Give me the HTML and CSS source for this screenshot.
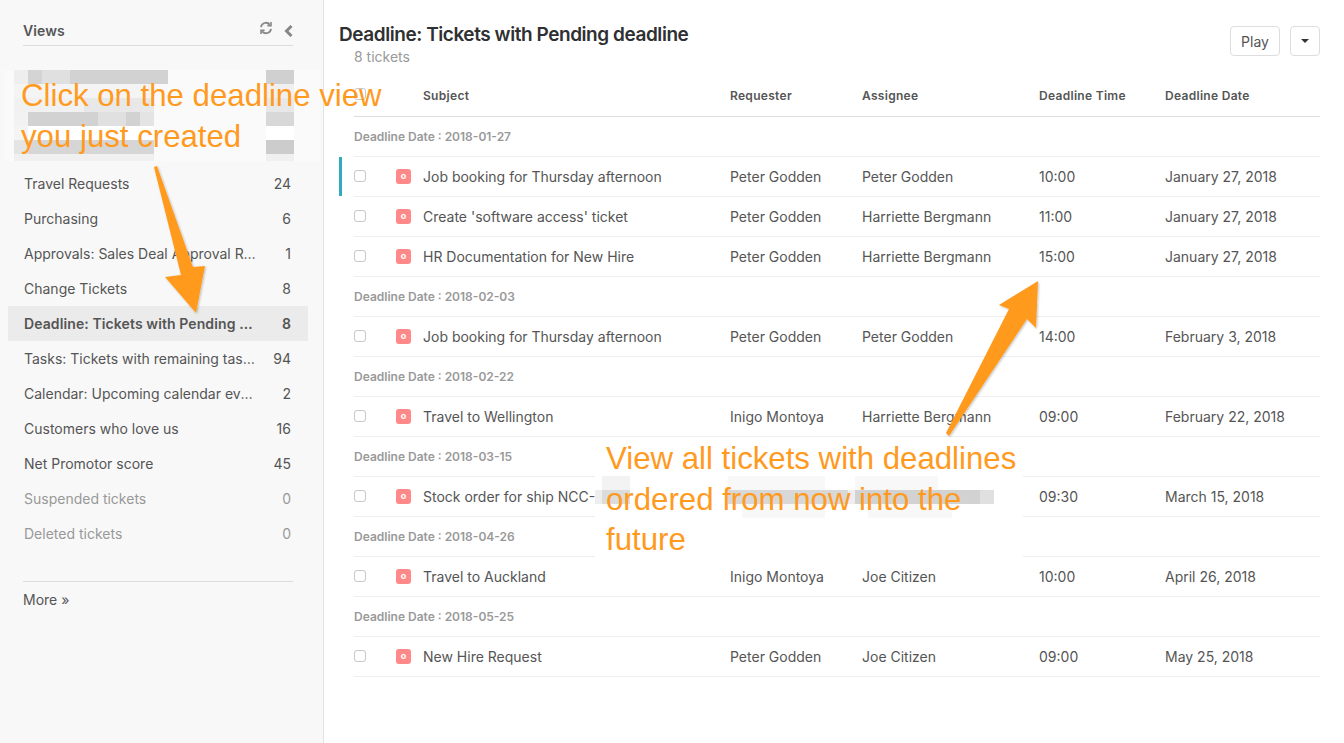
FILE: index.html
```html
<!DOCTYPE html>
<html lang="en">
<head>
<meta charset="utf-8">
<title>Deadline: Tickets with Pending deadline</title>
<link rel="stylesheet" href="styles.css">
</head>
<body>
<div class="app">
  <aside class="sidebar">
    <div class="side-head">
      <span class="side-title">Views</span>
      <svg class="icon-refresh" width="14" height="14" viewBox="0 0 14 14" fill="none" stroke="#888" stroke-width="1.8"><path d="M2 6.2a5 5 0 0 1 8.8-2.6"/><path d="M12 7.8a5 5 0 0 1-8.8 2.6"/><path d="M12 1v3.6H8.4" stroke-width="1.6"/><path d="M2 13V9.4h3.6" stroke-width="1.6"/></svg>
      <svg class="icon-collapse" width="9" height="12" viewBox="0 0 9 12"><path d="M7.5 1 2.5 6l5 5" fill="none" stroke="#888" stroke-width="3"/></svg>
    </div>
    <ul class="view-list">
      <li class="view"><span class="view-name">Travel Requests</span><span class="view-count">24</span></li>
      <li class="view"><span class="view-name">Purchasing</span><span class="view-count">6</span></li>
      <li class="view"><span class="view-name">Approvals: Sales Deal Approval Requests</span><span class="view-count">1</span></li>
      <li class="view"><span class="view-name">Change Tickets</span><span class="view-count">8</span></li>
      <li class="view active"><span class="view-name">Deadline: Tickets with Pending deadline</span><span class="view-count">8</span></li>
      <li class="view"><span class="view-name">Tasks: Tickets with remaining tasks due</span><span class="view-count">94</span></li>
      <li class="view"><span class="view-name">Calendar: Upcoming calendar events list</span><span class="view-count">2</span></li>
      <li class="view"><span class="view-name">Customers who love us</span><span class="view-count">16</span></li>
      <li class="view"><span class="view-name">Net Promotor score</span><span class="view-count">45</span></li>
      <li class="view muted"><span class="view-name">Suspended tickets</span><span class="view-count">0</span></li>
      <li class="view muted"><span class="view-name">Deleted tickets</span><span class="view-count">0</span></li>
    </ul>
    <div class="side-foot">More »</div>
  </aside>

  <main class="main">
    <header class="main-head">
      <div>
        <h1 class="title">Deadline: Tickets with Pending deadline</h1>
        <p class="subtitle">8 tickets</p>
      </div>
      <div class="actions">
        <button class="btn btn-play">Play</button>
        <button class="btn btn-menu"><span class="caret"></span></button>
      </div>
    </header>

    <section class="table">
      <div class="row head"><span class="check"></span><span></span><span>Subject</span><span>Requester</span><span>Assignee</span><span>Deadline Time</span><span>Deadline Date</span></div>

      <div class="group">Deadline Date : 2018-01-27</div>
      <div class="row current"><span class="check"></span><span class="badge">o</span><span>Job booking for Thursday afternoon</span><span>Peter Godden</span><span>Peter Godden</span><span>10:00</span><span>January 27, 2018</span></div>
      <div class="row"><span class="check"></span><span class="badge">o</span><span>Create 'software access' ticket</span><span>Peter Godden</span><span>Harriette Bergmann</span><span>11:00</span><span>January 27, 2018</span></div>
      <div class="row"><span class="check"></span><span class="badge">o</span><span>HR Documentation for New Hire</span><span>Peter Godden</span><span>Harriette Bergmann</span><span>15:00</span><span>January 27, 2018</span></div>

      <div class="group">Deadline Date : 2018-02-03</div>
      <div class="row"><span class="check"></span><span class="badge">o</span><span>Job booking for Thursday afternoon</span><span>Peter Godden</span><span>Peter Godden</span><span>14:00</span><span>February 3, 2018</span></div>

      <div class="group">Deadline Date : 2018-02-22</div>
      <div class="row"><span class="check"></span><span class="badge">o</span><span>Travel to Wellington</span><span>Inigo Montoya</span><span>Harriette Bergmann</span><span>09:00</span><span>February 22, 2018</span></div>

      <div class="group">Deadline Date : 2018-03-15</div>
      <div class="row"><span class="check"></span><span class="badge">o</span><span>Stock order for ship NCC-1701</span><span></span><span></span><span>09:30</span><span>March 15, 2018</span></div>

      <div class="group">Deadline Date : 2018-04-26</div>
      <div class="row"><span class="check"></span><span class="badge">o</span><span>Travel to Auckland</span><span>Inigo Montoya</span><span>Joe Citizen</span><span>10:00</span><span>April 26, 2018</span></div>

      <div class="group">Deadline Date : 2018-05-25</div>
      <div class="row"><span class="check"></span><span class="badge">o</span><span>New Hire Request</span><span>Peter Godden</span><span>Joe Citizen</span><span>09:00</span><span>May 25, 2018</span></div>
    </section>
  </main>
</div>

<svg class="overlay" width="1344" height="743" viewBox="0 0 1344 743">
  <defs>
    <filter id="arrow-shadow" x="-20%" y="-20%" width="140%" height="140%">
      <feDropShadow dx="1" dy="1" stdDeviation="1.2" flood-color="#000" flood-opacity="0.25"/>
    </filter>
  </defs>
  <!-- pixelated redaction, sidebar -->
  <g>
    <rect x="4" y="70" width="316" height="91" fill="#fafafa"/>
    <rect x="14" y="70" width="14" height="14" fill="#eeeeee"/>
    <rect x="28" y="70" width="14" height="14" fill="#d4d4d4"/>
    <rect x="42" y="70" width="28" height="14" fill="#e0e0e0"/>
    <rect x="70" y="70" width="98" height="14" fill="#d2d2d2"/>
    <rect x="14" y="84" width="140" height="14" fill="#f4f4f4"/>
    <rect x="14" y="98" width="70" height="14" fill="#f1f1f1"/>
    <rect x="84" y="98" width="70" height="14" fill="#e8e8e8"/>
    <rect x="14" y="112" width="14" height="14" fill="#f2f2f2"/>
    <rect x="28" y="112" width="70" height="14" fill="#d2d2d2"/>
    <rect x="98" y="112" width="28" height="14" fill="#e0e0e0"/>
    <rect x="126" y="112" width="14" height="14" fill="#d2d2d2"/>
    <rect x="140" y="112" width="14" height="14" fill="#e4e4e4"/>
    <rect x="14" y="126" width="14" height="14" fill="#f4f4f4"/>
    <rect x="28" y="126" width="126" height="14" fill="#fff"/>
    <rect x="14" y="140" width="14" height="14" fill="#e4e4e4"/>
    <rect x="28" y="140" width="126" height="14" fill="#d6d6d6"/>
    <rect x="14" y="154" width="140" height="7" fill="#f0f0f0"/>
    <rect x="266" y="70" width="28" height="14" fill="#d0d0d0"/>
    <rect x="266" y="84" width="28" height="14" fill="#f0f0f0"/>
    <rect x="266" y="98" width="28" height="14" fill="#e8e8e8"/>
    <rect x="266" y="112" width="28" height="14" fill="#d8d8d8"/>
    <rect x="266" y="126" width="28" height="14" fill="#fff"/>
    <rect x="266" y="140" width="28" height="14" fill="#cccccc"/>
    <rect x="266" y="154" width="28" height="7" fill="#f0f0f0"/>
  </g>
  <!-- pixelated redaction, ticket row -->
  <g>
    <rect x="595" y="438" width="428" height="120" fill="#fff"/>
    <rect x="602" y="476" width="28" height="14" fill="#f3f3f3"/>
    <rect x="728" y="476" width="97" height="14" fill="#f8f8f8"/>
    <rect x="855" y="476" width="83" height="14" fill="#f8f8f8"/>
    <rect x="595" y="490" width="7" height="14" fill="#eeeeee"/>
    <rect x="602" y="490" width="28" height="14" fill="#dcdcdc"/>
    <rect x="728" y="490" width="120" height="14" fill="#d8d8d8"/>
    <rect x="848" y="490" width="7" height="14" fill="#eeeeee"/>
    <rect x="855" y="490" width="125" height="14" fill="#d2d2d2"/>
    <rect x="980" y="490" width="14" height="14" fill="#e0e0e0"/>
    <rect x="742" y="504" width="83" height="14" fill="#f8f8f8"/>
    <rect x="868" y="504" width="84" height="14" fill="#f8f8f8"/>
  </g>
  <g fill="#ff9a1f" filter="url(#arrow-shadow)">
    <polygon points="154,167 157,166 193,267 205,266 196,313 165,277 181,275"/>
    <polygon points="946,433 949,436 1027,319 1036,328 1038,281 999,305 1009,309"/>
  </g>
</svg>
<div class="note note-click">Click on the deadline view<br>you just created</div>
<div class="note note-view">View all tickets with deadlines<br>ordered from now into the<br>future</div>
</body>
</html>
```

FILE: styles.css
```css
* { box-sizing: border-box; }
html, body { margin: 0; height: 743px; overflow: hidden; background: #fff; }
body { font-family: Inter, "Liberation Sans", sans-serif; font-size: 14px; color: #555; }
.app { display: flex; height: 743px; }

.sidebar { width: 324px; flex: none; background: #f8f8f8; border-right: 1px solid #e2e2e2; padding: 0 15px 0 8px; }
.side-head { display: flex; align-items: center; height: 46px; margin: 0 15px; padding-top: 16px; border-bottom: 1px solid #ddd; }
.side-title { flex: 1; font-weight: 600; color: #555; letter-spacing: 0.1px; }
.icon-refresh { margin: -5px 11px 0 0; }
.view-list { list-style: none; margin: 120px 0 0; padding: 0; }
.view { display: flex; justify-content: space-between; align-items: center; height: 35px; padding: 0 17px 0 16px; gap: 12px; }
.view-name { white-space: nowrap; overflow: hidden; text-overflow: ellipsis; max-width: 232px; }
.view.active { background: #ebebeb; font-weight: 600; letter-spacing: 0.1px; }
.view.muted { color: #999; }
.side-foot { margin: 30px 15px 0; padding-top: 9px; border-top: 1px solid #ddd; line-height: 17px; }

.main { flex: 1; padding: 0 24px 0 15px; min-width: 0; }
.main-head { display: flex; justify-content: space-between; height: 76px; }
.title { margin: 23px 0 0; font-size: 19px; line-height: 24px; font-weight: 600; color: #2f3032; letter-spacing: -0.44px; }
.subtitle { margin: 0 0 0 15px; line-height: 20px; color: #999; }
.actions { display: flex; gap: 10px; padding-top: 26px; }
.btn { height: 30px; background: #fff; border: 1px solid #ddd; border-radius: 4px; font: 14px Inter, "Liberation Sans", sans-serif; color: #555; padding: 0; }
.btn-play { width: 50px; }
.btn-menu { width: 30px; display: flex; align-items: center; justify-content: center; }
.caret { width: 0; height: 0; border: 4px solid transparent; border-top-color: #333; border-bottom: 0; }

.table { margin-left: 15px; }
.row { position: relative; display: grid; grid-template-columns: 42px 27px 307px 132px 177px 126px 1fr; align-items: center; height: 40px; border-bottom: 1px solid #eee; }
.row.head { height: 41px; padding-bottom: 2px; border-bottom-color: #ddd; font-size: 12px; font-weight: 600; color: #555; letter-spacing: 0.3px; }
.row.current::before { content: ""; position: absolute; left: -15px; top: 0; bottom: 0; width: 3px; background: #30aabc; }
.group { height: 40px; line-height: 39px; border-bottom: 1px solid #eee; font-size: 12px; font-weight: 600; color: #999; }
.check { width: 12px; height: 12px; margin-top: -2px; border: 1px solid #c8c8c8; border-radius: 3px; background: #fff; }
.badge { width: 15px; height: 15px; border-radius: 3px; background: #f88; color: #fff; font-size: 9px; font-weight: 700; line-height: 14px; text-align: center; }

.overlay { position: absolute; left: 0; top: 0; pointer-events: none; }
.note { position: absolute; font-family: "Liberation Sans", Arial, sans-serif; font-size: 31.2px; color: #ff9a1f; white-space: nowrap; }
.note-click { left: 21px; top: 75px; line-height: 41px; }
.note-view { left: 606px; top: 439px; line-height: 40.5px; }
```
